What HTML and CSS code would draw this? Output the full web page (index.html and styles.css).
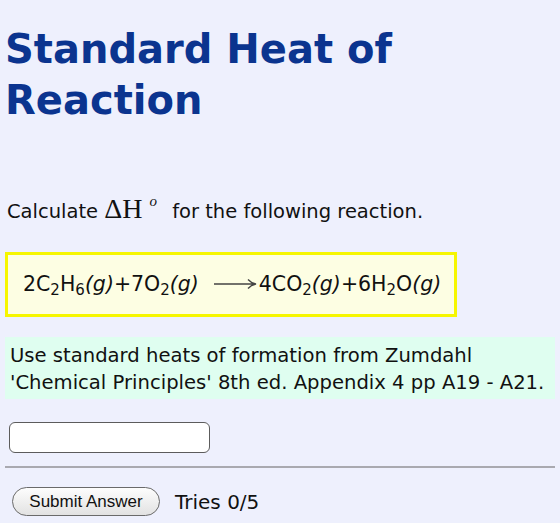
FILE: index.html
```html
<!DOCTYPE html>
<html lang="en">
<head>
  <meta charset="UTF-8" />
  <title>Standard Heat of Reaction</title>
  <link rel="stylesheet" href="styles.css">
</head>
<body>
  <h1>Standard Heat of Reaction</h1>

  <p class="prompt">Calculate <span class="math">&Delta;H<sup>o</sup></span> for the following reaction.</p>

  <div class="equation">
    2C<sub>2</sub>H<sub>6</sub><i>(g)</i>+7O<sub>2</sub><i>(g)</i><svg class="arrow" width="44" height="12" viewBox="0 0 44 12"><path d="M1 6H42M35 1.5Q38 5 43 6Q38 7 35 10.5" fill="none" stroke="#444" stroke-width="1.3"/></svg>4CO<sub>2</sub><i>(g)</i>+6H<sub>2</sub>O<i>(g)</i>
  </div>

  <div class="hint">Use standard heats of formation from Zumdahl<br>'Chemical Principles' 8th ed. Appendix 4 pp A19 - A21.</div>

  <input class="answer" type="text">
  <hr>

  <div class="submit-row">
    <button>Submit Answer</button>
    <span class="tries">Tries 0/5</span>
  </div>
</body>
</html>
```

FILE: styles.css
```css
body {
  margin: 0;
  padding: 0 5px;
  background: #eef0fd;
  font-family: "DejaVu Sans", Verdana, sans-serif;
  color: #111;
}

h1 {
  margin: 24px 0 0;
  font-size: 40px;
  line-height: 51px;
  color: #0b348f;
  width: 420px;
}

.prompt {
  margin: 65px 0 0 2px;
  font-size: 19.5px;
  line-height: 30px;
}

.math {
  font-family: "Liberation Serif", "Times New Roman", serif;
  font-size: 28px;
  margin: 0 2px 0 0;
  line-height: 20px;
}

.math sup {
  font-style: italic;
  font-size: 15px;
  vertical-align: 12px;
  margin: 0 7px 0 7px;
}

.equation {
  margin-top: 25px;
  width: 421px;
  padding: 14px 10px 15px 15px;
  border: 3px solid #f6f600;
  background: #fdfee3;
  font-size: 20.5px;
  line-height: 30px;
  white-space: nowrap;
}

.equation sub {
  font-size: 15px;
  line-height: 0;
  vertical-align: -4px;
}

.equation i {
  font-style: oblique;
}

.arrow {
  margin: 0 2px 0 14px;
  vertical-align: 1px;
}

.hint {
  margin-top: 20px;
  padding: 5px 5px 3px;
  background: #dffef0;
  font-size: 19.6px;
  line-height: 27px;
}

.answer {
  display: block;
  margin: 23px 0 0 4px;
  width: 201px;
  height: 31px;
  box-sizing: border-box;
  border: 1px solid #5c5c5c;
  border-radius: 6px;
  background: #fff;
}

hr {
  margin: 13px 0 0;
  border: none;
  border-top: 2px solid #a9a9b0;
}

.submit-row {
  display: flex;
  align-items: center;
  gap: 15px;
  margin: 19px 0 0 7px;
}

button {
  width: 148px;
  height: 29px;
  border: 1px solid #6a6a6a;
  border-radius: 15px;
  background: linear-gradient(#fdfdfd, #e2e2e2);
  font-family: "Liberation Sans", Arial, sans-serif;
  font-size: 17px;
  color: #111;
  padding: 0;
}

.tries {
  font-size: 20px;
}
```
